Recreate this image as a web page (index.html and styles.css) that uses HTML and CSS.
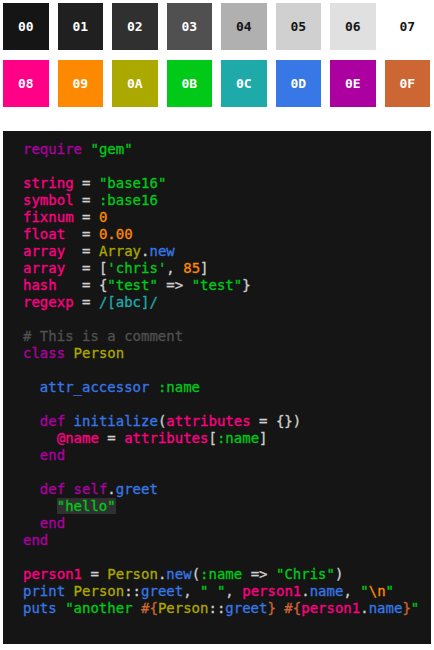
FILE: index.html
```html
<!DOCTYPE html>
<html>
<head>
<meta charset="utf-8">
<link rel="stylesheet" href="styles.css">
</head>
<body>
<div class="swatches">
  <div class="sw b00">00</div>
  <div class="sw b01">01</div>
  <div class="sw b02">02</div>
  <div class="sw b03">03</div>
  <div class="sw b04 dark">04</div>
  <div class="sw b05 dark">05</div>
  <div class="sw b06 dark">06</div>
  <div class="sw b07 dark">07</div>
  <div class="sw b08">08</div>
  <div class="sw b09">09</div>
  <div class="sw b0a">0A</div>
  <div class="sw b0b">0B</div>
  <div class="sw b0c">0C</div>
  <div class="sw b0d">0D</div>
  <div class="sw b0e">0E</div>
  <div class="sw b0f">0F</div>
</div>
<pre class="code"><span class="k">require</span> <span class="s">"gem"</span>

<span class="v">string</span> <span class="o">=</span> <span class="s">"base16"</span>
<span class="v">symbol</span> <span class="o">=</span> <span class="s">:base16</span>
<span class="v">fixnum</span> <span class="o">=</span> <span class="n">0</span>
<span class="v">float</span>  <span class="o">=</span> <span class="n">0.00</span>
<span class="v">array</span>  <span class="o">=</span> <span class="c">Array</span><span class="o">.</span><span class="f">new</span>
<span class="v">array</span>  <span class="o">=</span> <span class="o">[</span><span class="s">'chris'</span><span class="o">,</span> <span class="n">85</span><span class="o">]</span>
<span class="v">hash</span>   <span class="o">=</span> <span class="o">{</span><span class="s">"test"</span> <span class="o">=&gt;</span> <span class="s">"test"</span><span class="o">}</span>
<span class="v">regexp</span> <span class="o">=</span> <span class="r">/[abc]/</span>

<span class="cm"># This is a comment</span>
<span class="k">class</span> <span class="c">Person</span>

  <span class="f">attr_accessor</span> <span class="s">:name</span>

  <span class="k">def</span> <span class="f">initialize</span><span class="o">(</span><span class="v">attributes</span> <span class="o">=</span> <span class="o">{})</span>
    <span class="v">@name</span> <span class="o">=</span> <span class="v">attributes</span><span class="o">[</span><span class="s">:name</span><span class="o">]</span>
  <span class="k">end</span>

  <span class="k">def</span> <span class="k">self</span><span class="o">.</span><span class="f">greet</span>
    <span class="s hl">"hello"</span>
  <span class="k">end</span>
<span class="k">end</span>

<span class="v">person1</span> <span class="o">=</span> <span class="c">Person</span><span class="o">.</span><span class="f">new</span><span class="o">(</span><span class="s">:name</span> <span class="o">=&gt;</span> <span class="s">"Chris"</span><span class="o">)</span>
<span class="f">print</span> <span class="c">Person</span><span class="o">::</span><span class="f">greet</span><span class="o">,</span> <span class="s">" "</span><span class="o">,</span> <span class="v">person1</span><span class="o">.</span><span class="f">name</span><span class="o">,</span> <span class="s">"</span><span class="n">\n</span><span class="s">"</span>
<span class="f">puts</span> <span class="s">"another </span><span class="i">#{</span><span class="c">Person</span><span class="o">::</span><span class="f">greet</span><span class="i">}</span><span class="s"> </span><span class="i">#{</span><span class="v">person1</span><span class="o">.</span><span class="f">name</span><span class="i">}</span><span class="s">"</span></pre>
</body>
</html>
```
FILE: styles.css
```css
html, body {
  margin: 0;
  padding: 0;
  background: #ffffff;
}
body {
  padding: 3px;
  font-family: "DejaVu Sans Mono", monospace;
}
.swatches {
  width: 427px;
  display: grid;
  grid-template-columns: repeat(8, 1fr);
  column-gap: 9px;
  row-gap: 10px;
}
.sw {
  height: 47px;
  display: flex;
  align-items: center;
  justify-content: center;
  font-family: "DejaVu Sans Mono", monospace;
  font-weight: bold;
  font-size: 13px;
  color: #ffffff;
}
.sw.dark { color: #151515; }
.b00 { background: #151515; }
.b01 { background: #202020; }
.b02 { background: #303030; }
.b03 { background: #505050; }
.b04 { background: #b0b0b0; }
.b05 { background: #d0d0d0; }
.b06 { background: #e0e0e0; }
.b07 { background: #ffffff; }
.b08 { background: #ff0086; }
.b09 { background: #fd8900; }
.b0a { background: #aba800; }
.b0b { background: #00c918; }
.b0c { background: #1faaaa; }
.b0d { background: #3777e6; }
.b0e { background: #ad00a1; }
.b0f { background: #cc6633; }

.code {
  margin: 24px 0 0 0;
  width: 428px;
  box-sizing: border-box;
  background: #151515;
  color: #d0d0d0;
  font-family: "DejaVu Sans Mono", monospace;
  font-size: 14px;
  line-height: 17px;
  padding: 10px 20px 27px 20px;
  white-space: pre;
  overflow: hidden;
  -webkit-text-stroke: 0.3px currentColor;
}
.k { color: #ad00a1; }
.v { color: #ff0086; }
.s { color: #00c918; }
.n { color: #fd8900; }
.c { color: #aba800; }
.f { color: #3777e6; }
.o { color: #d0d0d0; }
.r { color: #1faaaa; }
.cm { color: #505050; }
.i { color: #cc6633; }
.hl { background: #303030; }
```
